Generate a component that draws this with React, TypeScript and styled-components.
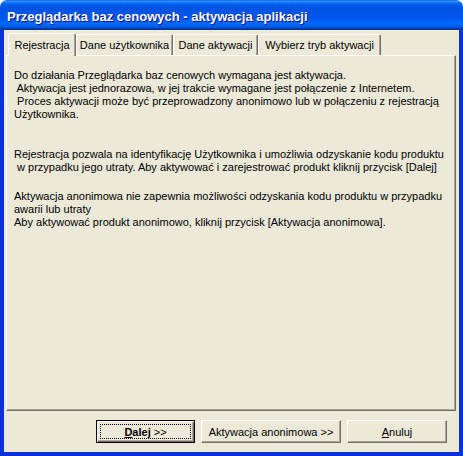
import React from "react";
import styled, { createGlobalStyle } from "styled-components";

const Global = createGlobalStyle`
  html, body { margin: 0; padding: 0; background: #ffffff; }
  body { font-family: "Liberation Sans", Arial, sans-serif; }
  #root { width: 463px; height: 456px; }
`;

const Window = styled.div`
  width: 463px;
  height: 456px;
  display: flex;
  flex-direction: column;
  box-sizing: border-box;
`;

const TitleBar = styled.div`
  height: 30px;
  flex: 0 0 30px;
  border-radius: 7px 7px 0 0;
  background: linear-gradient(
    to bottom,
    #0058ee 0%,
    #3a93ff 4%,
    #288eff 6%,
    #127dff 8%,
    #036ffc 10%,
    #0262ee 14%,
    #0057e5 20%,
    #0054e3 24%,
    #0055eb 56%,
    #005bf5 66%,
    #026afe 76%,
    #0062ef 86%,
    #0052d6 92%,
    #0040ab 94%,
    #003092 100%
  );
  display: flex;
  align-items: center;
  padding: 0 0 0 7px;
  box-sizing: border-box;
`;

const Title = styled.span`
  color: #ffffff;
  font-family: "Liberation Sans", Arial, sans-serif;
  font-weight: bold;
  font-size: 13px;
  text-shadow: 1px 1px #0f1089;
  margin-top: 2px;
  white-space: nowrap;
`;

const Frame = styled.div`
  flex: 1;
  display: flex;
  flex-direction: column;
  box-sizing: border-box;
  border-left: 4px solid #0831d9;
  border-right: 4px solid #0831d9;
  border-bottom: 4px solid #0831d9;
  box-shadow: inset 1px 0 0 #166aee, inset -1px 0 0 #001ea0;
  background: #ece9d8;
`;

const Client = styled.div`
  flex: 1;
  display: flex;
  flex-direction: column;
  padding: 2px 3px 0 2px;
  background: #ece9d8;
  font-family: "Liberation Sans", Arial, sans-serif;
  font-size: 11px;
  color: #000000;
`;

const TabStrip = styled.div`
  display: flex;
  align-items: flex-end;
  height: 23px;
  padding-left: 2px;
  position: relative;
  z-index: 1;
`;

const Tab = styled.div<{ $w: number; $active?: boolean }>`
  width: ${(p) => p.$w}px;
  box-sizing: border-box;
  height: ${(p) => (p.$active ? 23 : 21)}px;
  margin-bottom: ${(p) => (p.$active ? -1 : 0)}px;
  display: flex;
  align-items: center;
  justify-content: center;
  padding-bottom: ${(p) => (p.$active ? 1 : 0)}px;
  background: #ece9d8;
  border-top: 1px solid #ffffff;
  border-left: 1px solid #ffffff;
  border-right: 1px solid #716f64;
  box-shadow: inset -1px 0 0 #aca899;
  border-radius: 2px 2px 0 0;
  white-space: nowrap;
  font-size: 11px;
`;

const Panel = styled.div`
  height: 356px;
  box-sizing: border-box;
  border-top: 1px solid #ffffff;
  border-left: 1px solid #ffffff;
  border-right: 1px solid #716f64;
  border-bottom: 1px solid #716f64;
  box-shadow: inset -1px -1px 0 #aca899;
  padding: 13px 8px 0 7px;
  line-height: 13px;
`;

const Para = styled.p<{ $gap: number }>`
  margin: ${(p) => p.$gap}px 0 0 0;
  white-space: pre;
`;

const ButtonRow = styled.div`
  display: flex;
  justify-content: flex-end;
  gap: 6px;
  padding: 9px 9px 0 0;
`;

const Button = styled.button<{ $w: number; $default?: boolean }>`
  width: ${(p) => p.$w}px;
  height: 23px;
  box-sizing: border-box;
  background: #ece9d8;
  font-family: "Liberation Sans", Arial, sans-serif;
  font-size: 11px;
  color: #000;
  padding: 0;
  margin: 0;
  position: relative;
  display: flex;
  align-items: center;
  justify-content: center;
  border: 1px solid;
  border-color: ${(p) =>
    p.$default ? "#000000" : "#ffffff #716f64 #716f64 #ffffff"};
  box-shadow: ${(p) =>
    p.$default
      ? "inset 1px 1px 0 #ffffff, inset -1px -1px 0 #716f64, inset -2px -2px 0 #aca899"
      : "inset -1px -1px 0 #aca899"};
`;

const Focus = styled.span`
  position: absolute;
  left: 3px;
  top: 3px;
  right: 3px;
  bottom: 3px;
  border: 1px dotted #000;
  pointer-events: none;
`;

const Strong = styled.b`
  font-weight: bold;
`;

const U = styled.span`
  text-decoration: underline;
`;

export default function App() {
  return (
    <>
      <Global />
      <Window>
        <TitleBar>
          <Title>Przeglądarka baz cenowych - aktywacja aplikacji</Title>
        </TitleBar>
        <Frame>
          <Client>
            <TabStrip>
              <Tab $w={68} $active>Rejestracja</Tab>
              <Tab $w={97}>Dane użytkownika</Tab>
              <Tab $w={85}>Dane aktywacji</Tab>
              <Tab $w={123}>Wybierz tryb aktywacji</Tab>
            </TabStrip>
            <Panel>
              <Para $gap={0}>
                {"Do działania Przeglądarka baz cenowych wymagana jest aktywacja.\n Aktywacja jest jednorazowa, w jej trakcie wymagane jest połączenie z Internetem.\n Proces aktywacji może być przeprowadzony anonimowo lub w połączeniu z rejestracją\nUżytkownika."}
              </Para>
              <Para $gap={27}>
                {"Rejestracja pozwala na identyfikację Użytkownika i umożliwia odzyskanie kodu produktu\n w przypadku jego utraty. Aby aktywować i zarejestrować produkt kliknij przycisk [Dalej]"}
              </Para>
              <Para $gap={16}>
                {"Aktywacja anonimowa nie zapewnia możliwości odzyskania kodu produktu w przypadku\nawarii lub utraty\nAby aktywować produkt anonimowo, kliknij przycisk [Aktywacja anonimowa]."}
              </Para>
            </Panel>
            <ButtonRow>
              <Button $w={99} $default>
                <Focus />
                <Strong>
                  <U>D</U>alej
                </Strong>
                &nbsp;&gt;&gt;
              </Button>
              <Button $w={140}>Aktywacja anonimowa &gt;&gt;</Button>
              <Button $w={100}>
                <U>A</U>nuluj
              </Button>
            </ButtonRow>
          </Client>
        </Frame>
      </Window>
    </>
  );
}
